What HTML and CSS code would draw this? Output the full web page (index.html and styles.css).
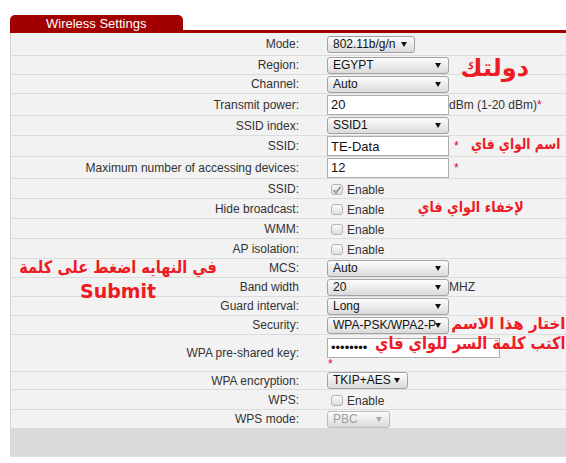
FILE: index.html
```html
<!DOCTYPE html>
<html>
<head>
<meta charset="utf-8">
<title>Wireless Settings</title>
<link rel="stylesheet" href="styles.css">
</head>
<body>
<div class="page">
  <div class="tabbar"><div class="tab">Wireless Settings</div></div>
  <div class="panel">
    <div class="row h23"><div class="lbl">Mode:</div><div class="ctl"><span class="sel w88"><span class="v">802.11b/g/n</span></span></div></div>
    <div class="row h19"><div class="lbl">Region:</div><div class="ctl"><span class="sel w122"><span class="v">EGYPT</span></span></div></div>
    <div class="row h19"><div class="lbl">Channel:</div><div class="ctl"><span class="sel w122"><span class="v">Auto</span></span></div></div>
    <div class="row h22"><div class="lbl">Transmit power:</div><div class="ctl"><input class="inp w122" type="text" value="20"><span class="unit">dBm (1-20 dBm)</span><span class="req">*</span></div></div>
    <div class="row h20"><div class="lbl">SSID index:</div><div class="ctl"><span class="sel w122"><span class="v">SSID1</span></span></div></div>
    <div class="row h21"><div class="lbl">SSID:</div><div class="ctl"><input class="inp w122" type="text" value="TE-Data"><span class="req gap">*</span></div></div>
    <div class="row h22"><div class="lbl">Maximum number of accessing devices:</div><div class="ctl"><input class="inp w122" type="text" value="12"><span class="req gap">*</span></div></div>
    <div class="row h20"><div class="lbl">SSID:</div><div class="ctl"><span class="chk"><span class="box"><svg width="10" height="10" viewBox="0 0 10 10"><path d="M1.5 5.2 L4 7.8 L8.6 1.6" fill="none" stroke="#9a9a9a" stroke-width="1.8"/></svg></span>Enable</span></div></div>
    <div class="row h20"><div class="lbl">Hide broadcast:</div><div class="ctl"><span class="chk"><span class="box"></span>Enable</span></div></div>
    <div class="row h20"><div class="lbl">WMM:</div><div class="ctl"><span class="chk"><span class="box"></span>Enable</span></div></div>
    <div class="row h20"><div class="lbl">AP isolation:</div><div class="ctl"><span class="chk"><span class="box"></span>Enable</span></div></div>
    <div class="row h19"><div class="lbl">MCS:</div><div class="ctl"><span class="sel w122"><span class="v">Auto</span></span></div></div>
    <div class="row h19"><div class="lbl">Band width</div><div class="ctl"><span class="sel w122"><span class="v">20</span></span><span class="unit">MHZ</span></div></div>
    <div class="row h19"><div class="lbl">Guard interval:</div><div class="ctl"><span class="sel w122"><span class="v">Long</span></span></div></div>
    <div class="row h19"><div class="lbl">Security:</div><div class="ctl"><span class="sel w122"><span class="v">WPA-PSK/WPA2-PSK</span></span></div></div>
    <div class="row h37"><div class="lbl">WPA pre-shared key:</div><div class="ctl col"><input class="inp w173" type="password" value="12345678"><span class="req under">*</span></div></div>
    <div class="row h18"><div class="lbl">WPA encryption:</div><div class="ctl"><span class="sel w81"><span class="v">TKIP+AES</span></span></div></div>
    <div class="row h20"><div class="lbl">WPS:</div><div class="ctl"><span class="chk"><span class="box"></span>Enable</span></div></div>
    <div class="row h18 last"><div class="lbl">WPS mode:</div><div class="ctl"><span class="sel w63 dis"><span class="v">PBC</span></span></div></div>
    <div class="btnbar"></div>
  </div>

  <div class="note n1">دولتك</div>
  <div class="note n2">اسم الواي فاي</div>
  <div class="note n3">لإخفاء الواي فاي</div>
  <div class="note n4">في النهايه اضغط على كلمة</div>
  <div class="note n5">Submit</div>
  <div class="note n6">اختار هذا الاسم</div>
  <div class="note n7">اكتب كلمة السر للواي فاي</div>
</div>
</body>
</html>
```
FILE: styles.css
```css
html, body {
  margin: 0;
  padding: 0;
  background: #fff;
}
body {
  font-family: "Liberation Sans", Arial, sans-serif;
  font-size: 12px;
  color: #333;
  overflow: hidden;
}
.page {
  position: relative;
  padding: 15px 0 0 10px;
}
.tabbar {
  height: 15px;
  border-bottom: 3px solid #a20000;
}
.tab {
  width: 173px;
  height: 15px;
  box-sizing: border-box;
  padding-left: 36px;
  background: #a20000;
  border-radius: 5px 5px 0 0;
  color: #fff;
  font-size: 13px;
  line-height: 17px;
  white-space: nowrap;
}
.panel {
  background: #f2f2f2;
  border-left: 1px solid #d6d6d6;
  border-bottom: 1px solid #e2e2e2;
}
.row {
  display: flex;
  align-items: center;
  box-sizing: border-box;
  border-bottom: 1px solid #dcdcdc;
}
.row.last { border-bottom: none; }
.h18 { height: 18px; }
.h19 { height: 19px; }
.h20 { height: 20px; }
.h21 { height: 21px; }
.h22 { height: 22px; }
.h23 { height: 23px; }
.h37 { height: 37px; }
.lbl {
  flex: none;
  width: 290px;
  box-sizing: border-box;
  padding-right: 2px;
  text-align: right;
  white-space: nowrap;
}
.ctl {
  margin-left: 26px;
  display: flex;
  align-items: center;
  white-space: nowrap;
}
.ctl.col {
  flex-direction: column;
  align-items: flex-start;
  padding-top: 2px;
}
.sel {
  position: relative;
  display: block;
  height: 17px;
  box-sizing: border-box;
  border: 1px solid #a3a3a3;
  border-radius: 3px;
  background: linear-gradient(#fdfdfd, #dadada);
  color: #111;
  font-size: 12px;
  line-height: 15px;
  padding-left: 5px;
}
.sel .v {
  display: block;
  overflow: hidden;
  margin-right: 12px;
}
.sel::after {
  content: "";
  position: absolute;
  right: 7px;
  top: 5px;
  width: 0;
  height: 0;
  border-left: 3px solid transparent;
  border-right: 3px solid transparent;
  border-top: 5px solid #111;
}
.sel.dis {
  color: #9c9c9c;
  border-color: #bdbdbd;
}
.sel.dis::after { border-top-color: #a8a8a8; }
.w63 { width: 63px; }
.w81 { width: 81px; }
.w88 { width: 88px; }
.w122 { width: 122px; }
.w173 { width: 173px; }
.inp {
  display: block;
  height: 20px;
  box-sizing: border-box;
  margin: 0;
  border: 1px solid #adadad;
  background: #fff;
  font-family: "Liberation Sans", Arial, sans-serif;
  font-size: 13px;
  color: #111;
  padding: 0 3px;
  outline: none;
}
.unit { color: #333; }
.req {
  color: #e0003c;
  font-size: 12px;
}
.req.gap { margin-left: 5px; }
.req.under {
  line-height: 13px;
  margin-left: 1px;
}
.chk {
  display: flex;
  align-items: center;
  color: #333;
  padding-top: 2px;
}
.box {
  width: 12px;
  height: 11px;
  box-sizing: border-box;
  margin: 0 4px 0 4px;
  border: 1px solid #b4b4b4;
  border-radius: 3px;
  background: linear-gradient(#fafafa, #dedede);
  display: flex;
  align-items: center;
  justify-content: center;
}
.box svg { display: block; }
.btnbar {
  height: 28px;
  background: #dadada;
}
.note {
  position: absolute;
  color: #ed1c24;
  font-family: "DejaVu Sans", sans-serif;
  font-weight: bold;
  line-height: 1;
  white-space: nowrap;
  direction: rtl;
  transform-origin: right top;
}
.n1 { right: 37px; top: 56px; font-size: 24px; }
.n2 { right: 6px; top: 137px; font-size: 15px; transform: scaleX(0.81); }
.n3 { right: 42px; top: 200px; font-size: 15px; transform: scaleX(0.85); }
.n4 { right: 349px; top: 259px; font-size: 17px; transform: scaleX(0.86); }
.n5 { left: 80px; top: 282px; font-size: 19px; direction: ltr; }
.n6 { right: 1px; top: 316px; font-size: 16px; transform: scaleX(0.94); }
.n7 { right: 1px; top: 335px; font-size: 17px; transform: scaleX(0.86); }
```
